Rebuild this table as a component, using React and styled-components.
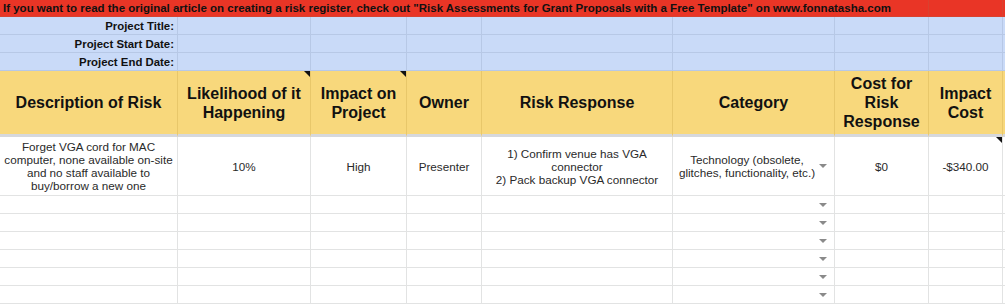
import React from "react";
import styled, { createGlobalStyle, css } from "styled-components";

const GlobalStyle = createGlobalStyle`
  html, body { margin: 0; padding: 0; background: #fff; }
  body { font-family: "Liberation Sans", Arial, sans-serif; }
`;

const COLS = "178px 133px 96px 75px 191px 162px 94px 74px 1fr";

const Sheet = styled.div`
  display: grid;
  grid-template-columns: ${COLS};
  width: 1005px;
  overflow: hidden;
`;

const tones = {
  red: css`
    background: #e93526;
    border-color: #d9412f;
  `,
  blue: css`
    background: #c9daf8;
    border-color: #b7c8e6;
  `,
  yellow: css`
    background: #f8d87c;
    border-color: #e8c76a;
  `,
  white: css`
    background: #fff;
    border-color: #e2e3e3;
  `,
};

const Cell = styled.div`
  position: relative;
  box-sizing: border-box;
  height: ${({ h }) => h}px;
  border-style: solid;
  border-width: 0 1px 1px 0;
  ${({ tone }) => tones[tone || "white"]}
  ${({ frozen }) =>
    frozen &&
    css`
      border-bottom: 3px solid #d6d8dc;
    `}
  display: flex;
  align-items: center;
  justify-content: center;
  text-align: center;
  overflow: visible;
`;

const Banner = styled(Cell)`
  grid-column: 1 / 8;
  justify-content: flex-start;
  padding-left: 3px;
  white-space: nowrap;
  font-size: 11.5px;
  font-weight: 700;
  color: #111;
  z-index: 1;
`;

const Label = styled(Cell)`
  justify-content: flex-end;
  padding-right: 3px;
  font-size: 11.4px;
  font-weight: 700;
  color: #111;
`;

const Head = styled(Cell)`
  font-size: 16px;
  font-weight: 700;
  line-height: 19px;
  color: #111;
  padding: 0 3px;
`;

const Data = styled(Cell)`
  font-size: 11.7px;
  line-height: 13px;
  color: #2a2a2a;
  padding: ${({ drop }) => (drop ? "0 16px 0 3px" : "0 3px")};
  white-space: pre-line;
`;

const Note = styled.span`
  position: absolute;
  top: 0;
  right: 0;
  width: 0;
  height: 0;
  border-top: 6px solid #111;
  border-left: 6px solid transparent;
`;

const Arrow = styled.span`
  position: absolute;
  right: 7px;
  top: 50%;
  margin-top: -2px;
  width: 0;
  height: 0;
  border-top: 4px solid #8a8a8a;
  border-left: 4px solid transparent;
  border-right: 4px solid transparent;
`;

const headers = [
  { t: "Description of Risk" },
  { t: "Likelihood of it Happening", note: true },
  { t: "Impact on Project", note: true },
  { t: "Owner" },
  { t: "Risk Response" },
  { t: "Category" },
  { t: "Cost for Risk Response" },
  { t: "Impact Cost" },
  { t: "" },
];

const row = [
  "Forget VGA cord for MAC computer, none available on-site and no staff available to buy/borrow a new one",
  "10%",
  "High",
  "Presenter",
  "1) Confirm venue has VGA connector\n2) Pack backup VGA connector",
  "Technology (obsolete, glitches, functionality, etc.)",
  "$0",
  "-$340.00",
  "",
];

const labels = ["Project Title:", "Project Start Date:", "Project End Date:"];

export default function App() {
  return (
    <>
      <GlobalStyle />
      <Sheet>
        <Banner tone="red" h={17}>
          If you want to read the original article on creating a risk register, check out "Risk
          Assessments for Grant Proposals with a Free Template" on www.fonnatasha.com
        </Banner>
        <Cell tone="red" h={17} />
        <Cell tone="red" h={17} />

        {labels.map((l) => (
          <React.Fragment key={l}>
            <Label tone="blue" h={18}>{l}</Label>
            {Array.from({ length: 8 }).map((_, i) => (
              <Cell key={i} tone="blue" h={18} />
            ))}
          </React.Fragment>
        ))}

        {headers.map((hd, i) => (
          <Head key={i} tone="yellow" h={66} frozen>
            {hd.t}
            {hd.note && <Note />}
          </Head>
        ))}

        {row.map((v, i) => (
          <Data key={i} h={59} drop={i === 5}>
            {v}
            {i === 5 && <Arrow />}
            {i === 7 && <Note />}
          </Data>
        ))}

        {Array.from({ length: 6 }).map((_, r) =>
          Array.from({ length: 9 }).map((_, i) => (
            <Data key={`${r}-${i}`} h={18} drop={i === 5}>
              {i === 5 && <Arrow />}
            </Data>
          ))
        )}
      </Sheet>
    </>
  );
}
